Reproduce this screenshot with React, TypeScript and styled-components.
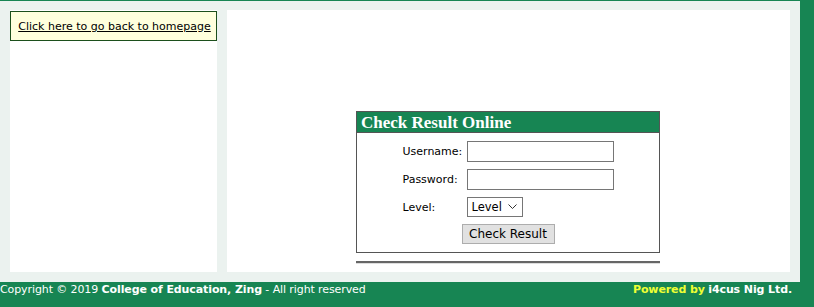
import React from "react";
import styled, { createGlobalStyle } from "styled-components";

const GREEN = "#178553";

const Global = createGlobalStyle`
  html, body { margin: 0; padding: 0; }
  body {
    background: ${GREEN};
    font-family: "DejaVu Sans", Tahoma, sans-serif;
    font-size: 11px;
    color: #000;
  }
`;

const Page = styled.div`
  padding-top: 1px;
`;

const Container = styled.div`
  width: 800px;
  box-sizing: border-box;
  background: #ebf2ef;
  padding: 9px 10px 10px 10px;
  display: flex;
  gap: 10px;
`;

const Sidebar = styled.aside`
  width: 207px;
  height: 262px;
  background: #fff;
  padding-top: 1px;
  box-sizing: border-box;
`;

const HomeLink = styled.a`
  display: flex;
  align-items: center;
  justify-content: center;
  height: 30px;
  box-sizing: border-box;
  background: #ffffdd;
  border: 1px solid #1c4f1c;
  color: #000;
  text-decoration: underline;
  font-size: 11px;
  padding-left: 2px;
`;

const Main = styled.main`
  width: 563px;
  height: 262px;
  background: #fff;
  padding: 101px 1px 0 0;
  box-sizing: border-box;
  display: flex;
  flex-direction: column;
  align-items: center;
`;

const Box = styled.section`
  width: 304px;
  height: 142px;
  box-sizing: border-box;
  border: 1px solid #555;
`;

const BoxTitle = styled.h2`
  margin: 0;
  height: 20px;
  background: ${GREEN};
  color: #fff;
  font-family: "Liberation Serif", "Times New Roman", serif;
  font-weight: bold;
  font-size: 17px;
  line-height: 21px;
  padding-left: 4px;
  border-bottom: 1px solid #555;
`;

const Form = styled.form`
  display: grid;
  grid-template-columns: 61px auto;
  justify-content: center;
  column-gap: 3px;
  row-gap: 7px;
  align-items: center;
  padding-top: 8px;
`;

const Label = styled.label`
  font-size: 11px;
  white-space: nowrap;
`;

const TextInput = styled.input`
  width: 147px;
  height: 21px;
  box-sizing: border-box;
  border: 1px solid #767676;
  border-radius: 0;
  padding: 0 3px;
  margin: 0;
  font: inherit;
`;

const Select = styled.div`
  width: 56px;
  height: 20px;
  box-sizing: border-box;
  border: 1px solid #767676;
  display: flex;
  align-items: center;
  justify-content: space-between;
  padding: 0 5px 0 4px;
  font-size: 11.5px;
  font-family: "DejaVu Sans", Tahoma, sans-serif;
`;

const ButtonCell = styled.div`
  grid-column: 1 / span 2;
  display: flex;
  justify-content: center;
  margin-top: 0;
`;

const Button = styled.button`
  width: 93px;
  height: 20px;
  box-sizing: border-box;
  background: #e1e1e1;
  border: 1px solid #adadad;
  border-radius: 0;
  font-family: "DejaVu Sans", Tahoma, sans-serif;
  font-size: 12px;
  color: #000;
  padding: 0;
`;

const Rule = styled.hr`
  width: 304px;
  margin: 8px 0 0 0;
  border: 0;
  border-top: 2px solid #666;
  border-bottom: 1px solid #ddd;
  height: 0;
`;

const Footer = styled.footer`
  height: 25px;
  box-sizing: border-box;
  display: flex;
  justify-content: space-between;
  padding: 1px 22px 0 0;
  color: #fff;
  font-size: 11px;
  line-height: 14px;
  letter-spacing: -0.1px;
`;

const Powered = styled.span`
  color: #eeff33;
  font-weight: bold;
`;

const Strong = styled.b`
  color: #fff;
`;

export default function App() {
  return (
    <>
      <Global />
      <Page>
        <Container>
          <Sidebar>
            <HomeLink href="#">Click here to go back to homepage</HomeLink>
          </Sidebar>
          <Main>
            <Box>
              <BoxTitle>Check Result Online</BoxTitle>
              <Form onSubmit={(e) => e.preventDefault()}>
                <Label>Username:</Label>
                <TextInput type="text" />
                <Label>Password:</Label>
                <TextInput type="password" />
                <Label>Level:</Label>
                <Select>
                  <span>Level</span>
                  <svg width="9" height="6" viewBox="0 0 9 6">
                    <path d="M0.5 0.5 L4.5 4.5 L8.5 0.5" fill="none" stroke="#333" strokeWidth="1" />
                  </svg>
                </Select>
                <ButtonCell>
                  <Button type="submit">Check Result</Button>
                </ButtonCell>
              </Form>
            </Box>
            <Rule />
          </Main>
        </Container>
        <Footer>
          <span>
            Copyright © 2019 <Strong>College of Education, Zing</Strong> - All right reserved
          </span>
          <span>
            <Powered>Powered by</Powered> <Strong>i4cus Nig Ltd.</Strong>
          </span>
        </Footer>
      </Page>
    </>
  );
}
